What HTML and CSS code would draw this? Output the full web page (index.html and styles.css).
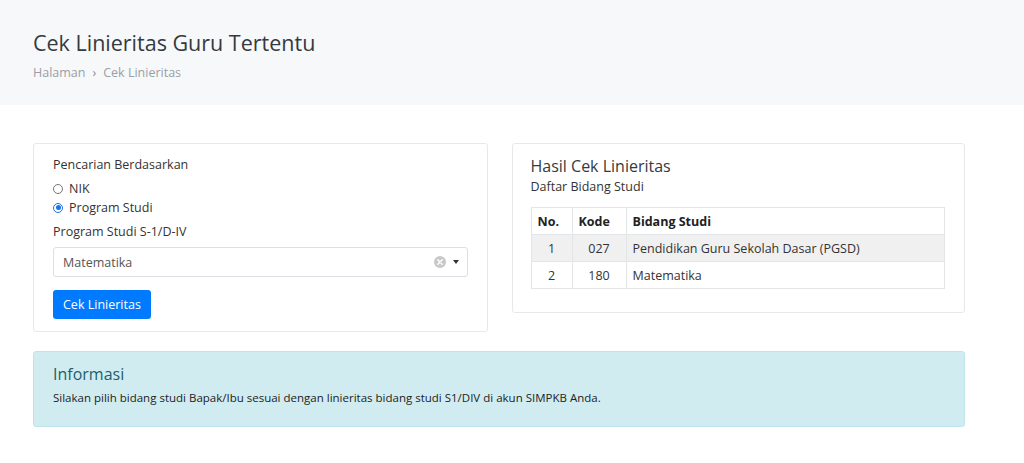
FILE: index.html
```html
<!DOCTYPE html>
<html lang="id">
<head>
  <meta charset="UTF-8">
  <title>Cek Linieritas Guru Tertentu</title>
  <link rel="stylesheet" href="styles.css">
</head>
<body>
  <header class="page-header">
    <h1 class="page-title">Cek Linieritas Guru Tertentu</h1>
    <nav class="breadcrumb">
      <span>Halaman</span>
      <span class="sep">›</span>
      <span>Cek Linieritas</span>
    </nav>
  </header>

  <main class="content">
    <div class="row">
      <!-- Form pencarian -->
      <div class="card">
        <div class="form-label">Pencarian Berdasarkan</div>
        <label class="radio"><span class="radio-dot"></span>NIK</label>
        <label class="radio"><span class="radio-dot checked"></span>Program Studi</label>
        <div class="form-label field-label">Program Studi S-1/D-IV</div>
        <div class="select">
          <span class="select-value">Matematika</span>
          <span class="select-clear">
            <svg width="12" height="12" viewBox="0 0 12 12">
              <circle cx="6" cy="6" r="6" fill="#c8c8c8"/>
              <path d="M3.8 3.8 L8.2 8.2 M8.2 3.8 L3.8 8.2" stroke="#fff" stroke-width="1.5" stroke-linecap="round"/>
            </svg>
          </span>
          <span class="select-caret"></span>
        </div>
        <button class="btn">Cek Linieritas</button>
      </div>

      <!-- Hasil -->
      <div class="card card-result">
        <h2 class="card-title">Hasil Cek Linieritas</h2>
        <div class="card-subtitle">Daftar Bidang Studi</div>
        <table class="table">
          <thead>
            <tr><th class="col-no">No.</th><th class="col-kode">Kode</th><th>Bidang Studi</th></tr>
          </thead>
          <tbody>
            <tr class="striped"><td class="center">1</td><td class="center">027</td><td>Pendidikan Guru Sekolah Dasar (PGSD)</td></tr>
            <tr><td class="center">2</td><td class="center">180</td><td>Matematika</td></tr>
          </tbody>
        </table>
      </div>
    </div>

    <div class="alert">
      <h4 class="alert-title">Informasi</h4>
      <p class="alert-text">Silakan pilih bidang studi Bapak/Ibu sesuai dengan linieritas bidang studi S1/DIV di akun SIMPKB Anda.</p>
    </div>
  </main>
</body>
</html>
```

FILE: styles.css
```css
/* Base */
body, html {
  margin: 0;
  padding: 0;
  font-family: "Open Sans", Arial, sans-serif;
  color: #333;
  background: #fff;
}

/* Header band */
.page-header {
  background-color: #f7f8fa;
  height: 105px;
  box-sizing: border-box;
  padding: 28px 33px 0;
}

.page-title {
  margin: 0;
  font-size: 21.5px;
  font-weight: 400;
  color: #343a40;
  line-height: 30px;
}

.breadcrumb {
  margin-top: 6px;
  font-size: 12.5px;
  color: #9a9fa5;
  display: flex;
  gap: 7px;
}

.breadcrumb .sep {
  color: #888;
}

/* Content */
.content {
  padding: 38px 59px 0 33px;
}

.row {
  display: flex;
  gap: 24px;
  align-items: flex-start;
}

.card {
  flex: 1;
  border: 1px solid #e6e8ea;
  border-radius: 3px;
  padding: 11px 19px 12px 19px;
  box-sizing: border-box;
  font-size: 12.5px;
  color: #333;
}

.form-label {
  line-height: 20px;
  margin-bottom: 4px;
}

.field-label {
  margin-top: 5px;
  margin-bottom: 5px;
}

.radio {
  display: flex;
  align-items: center;
  line-height: 19px;
}

.radio-dot {
  width: 10px;
  height: 10px;
  border: 1px solid #767676;
  border-radius: 50%;
  margin-right: 6px;
  box-sizing: border-box;
  position: relative;
}

.radio-dot.checked {
  border-color: #1a73e8;
  background: #fff;
}

.radio-dot.checked::after {
  content: "";
  position: absolute;
  left: 1.5px;
  top: 1.5px;
  width: 5px;
  height: 5px;
  border-radius: 50%;
  background: #1a73e8;
}

.select {
  display: flex;
  align-items: center;
  height: 30px;
  border: 1px solid #dcdfe3;
  border-radius: 3px;
  padding: 0 8px 0 9px;
  box-sizing: border-box;
  margin-bottom: 13px;
}

.select-value {
  flex: 1;
  color: #555;
}

.select-clear {
  display: flex;
  margin-right: 7px;
}

.select-caret {
  width: 0;
  height: 0;
  border-left: 3.5px solid transparent;
  border-right: 3.5px solid transparent;
  border-top: 4px solid #333;
}

.btn {
  background-color: #007bff;
  color: #fff;
  border: none;
  border-radius: 3px;
  font-family: inherit;
  font-size: 12.5px;
  height: 29px;
  padding: 0 10px;
  cursor: pointer;
}

/* Result card */
.card-result {
  padding: 11px 19px 23px 18px;
}

.card-title {
  margin: 0;
  font-size: 16px;
  font-weight: 400;
  color: #343a40;
  line-height: 22px;
}

.card-subtitle {
  line-height: 20px;
  margin-bottom: 10px;
}

.table {
  width: 100%;
  border-collapse: collapse;
  font-size: 12.5px;
}

.table th, .table td {
  border: 1px solid #e3e6e9;
  padding: 0 6px;
  height: 26px;
  text-align: left;
}

.table th {
  font-weight: 700;
  color: #222;
}

.table .col-no {
  width: 28px;
}

.table .col-kode {
  width: 41px;
}

.table td.center {
  text-align: center;
}

.table tr.striped td {
  background-color: #f0f0f0;
}

/* Info alert */
.alert {
  margin-top: 19px;
  background-color: #d1ecf1;
  border: 1px solid #bee5eb;
  border-radius: 3px;
  padding: 11px 19px 21px;
  color: #0c5460;
}

.alert-title {
  margin: 0;
  font-size: 16px;
  font-weight: 400;
  line-height: 22px;
  color: #1b5f6b;
}

.alert-text {
  margin: 5px 0 0;
  font-size: 11.5px;
  color: #222;
}
```
